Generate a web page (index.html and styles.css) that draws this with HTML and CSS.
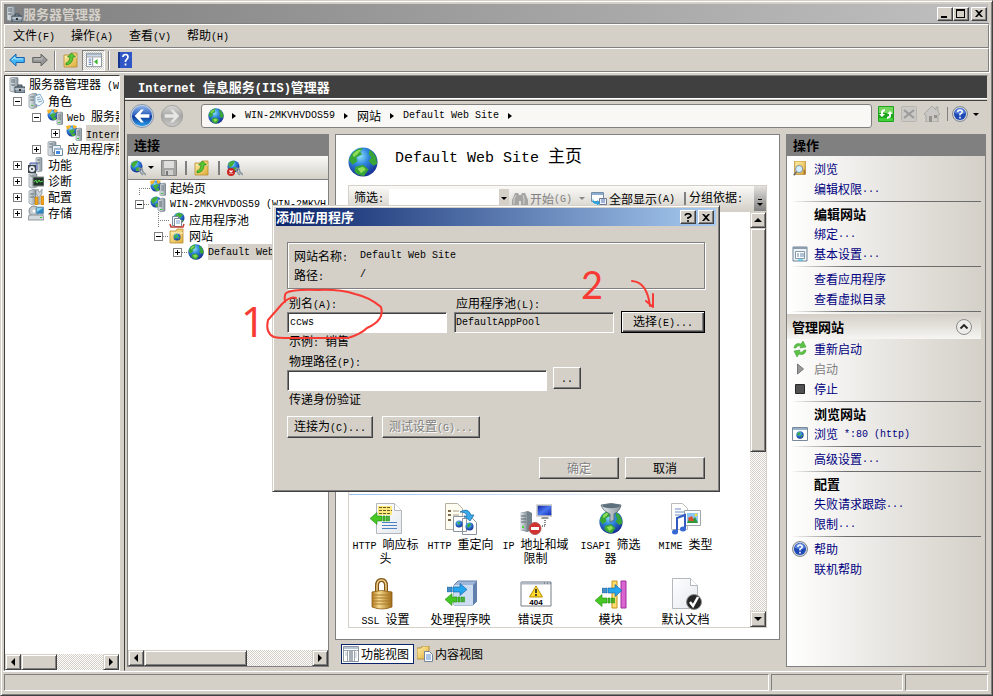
FILE: index.html
```html
<!DOCTYPE html>
<html lang="zh-CN">
<head>
<meta charset="utf-8">
<title>服务器管理器</title>
<link rel="stylesheet" href="styles.css">
</head>
<body>
<svg class="defs" aria-hidden="true">
  <defs>
    <radialGradient id="sea" cx=".4" cy=".3" r=".75"><stop offset="0" stop-color="#8fe0fb"/><stop offset=".4" stop-color="#2f86dc"/><stop offset="1" stop-color="#14258a"/></radialGradient>
    <linearGradient id="orb" x2="0" y2="1"><stop offset="0" stop-color="#8db4ec"/><stop offset=".48" stop-color="#2558b8"/><stop offset=".52" stop-color="#0d3796"/><stop offset="1" stop-color="#2ba0ee"/></linearGradient>
    <linearGradient id="dim" x2="0" y2="1"><stop offset="0" stop-color="#d8d8d6"/><stop offset=".5" stop-color="#a6a6a4"/><stop offset="1" stop-color="#c9c9c7"/></linearGradient>
    <linearGradient id="steel" x2="1"><stop offset="0" stop-color="#e8edf0"/><stop offset="1" stop-color="#89949c"/></linearGradient>
    <linearGradient id="paper" x2="1" y2="1"><stop offset="0" stop-color="#fff"/><stop offset="1" stop-color="#e4e8ee"/></linearGradient>
    <linearGradient id="gold" x2="1"><stop offset="0" stop-color="#b57a1e"/><stop offset=".35" stop-color="#f6dc92"/><stop offset="1" stop-color="#a06a14"/></linearGradient>
    <linearGradient id="yel" x2="1" y2="1"><stop offset="0" stop-color="#fff0a8"/><stop offset="1" stop-color="#dfae3c"/></linearGradient>
    <linearGradient id="screen" x2="1" y2="1"><stop offset="0" stop-color="#0a1a9a"/><stop offset=".5" stop-color="#4a76f0"/><stop offset="1" stop-color="#0a22b0"/></linearGradient>

    <symbol id="globe" viewBox="0 0 32 32"><circle cx="16" cy="16" r="15.5" fill="url(#sea)"/><path d="M3 9Q8 1 16 1L13 5 15 8 9 11 10 15 5 19 1 14ZM23 3Q31 8 31 18L27 20 22 15 25 11 22 8ZM8 21L16 19 22 24 17 31Q10 30 7 26Z" fill="#38a636"/><path d="M5 8Q9 3 14 3L10 8 6 11ZM10 23L16 21 19 24 14 28Z" fill="#90dd58"/></symbol>
    <symbol id="mgr" viewBox="0 0 16 16"><path d="M1 1L7 0 9 1V14L4 15 1 14Z" fill="url(#steel)" stroke="#74828a" stroke-width=".7"/><path d="M2 3h4M2 5h4M2 8h4" stroke="#5c6a72"/><path d="M6 10h10v6H6zM9 10V8h4v2" fill="#8a9aa6" stroke="#3c4a54"/><path d="M6 12h10" stroke="#dfe6ea"/><path d="M10 12h2v2h-2z" fill="#333"/></symbol>
    <symbol id="roles" viewBox="0 0 16 16"><path d="M1 2L6 0 9 1V14L4 16 1 14Z" fill="url(#steel)" stroke="#74828a" stroke-width=".6"/><path d="M2 4h4M2 7h4" stroke="#65727a"/><path d="M7 3L12 1 16 9 11 13 7 11Z" fill="#eef6fc" stroke="#6b9cc0" stroke-width=".8"/><path d="M9 5L12 4M9 7L13 6M10 9L14 8" stroke="#6c93b4" stroke-width=".8"/><path d="M3 12h2v1H3z" fill="#3c3"/></symbol>
    <symbol id="iis" viewBox="0 0 16 16"><circle cx="6" cy="6" r="5.5" fill="url(#sea)"/><path d="M3 6Q6 3 9 5L7 8 5 9ZM5 9l4-1v3H6z" fill="#45ae39"/><path d="M0 1L5 0 4 3 1 5ZM7 0L11 1 9 4 7 3Z" fill="#f5b32b"/><path d="M10 4L14 3 16 4V15L12 16 10 15Z" fill="url(#steel)" stroke="#697780" stroke-width=".6"/><path d="M11 6h3M11 8h3M11 10h3" stroke="#56636b" stroke-width=".8"/><path d="M11 13h2v1h-2z" fill="#3c3"/></symbol>
    <symbol id="site" viewBox="0 0 16 16"><circle cx="6" cy="6" r="5.5" fill="url(#sea)"/><path d="M1 4Q4 0 8 1L6 5 3 8ZM5 8l4-1v4H6z" fill="#45ae39"/><path d="M8 4L13 2 15 3V15L11 16 8 14Z" fill="url(#steel)" stroke="#697780" stroke-width=".6"/><path d="M9 6h3M9 8h3M9 10h3" stroke="#56636b"/><path d="M10 13h2v1h-2z" fill="#3c3"/></symbol>
    <symbol id="appsrv" viewBox="0 0 16 16"><path d="M1 1L6 0 9 1V14L4 15 1 14Z" fill="url(#steel)" stroke="#74828a" stroke-width=".6"/><path d="M2 3h4M2 6h4" stroke="#65727a"/><path d="M5.500 4.500h8v7h-8z" fill="#e8eff5" stroke="#8395a5"/><path d="M7.500 7.500h8v7h-8z" fill="#fff" stroke="#6f8598"/><path d="M7 8h9" stroke="#9cb7cf" stroke-width="2"/><path d="M9 10h4v3H9z" fill="#3d8ae0"/></symbol>
    <symbol id="feature" viewBox="0 0 16 16"><path d="M8 1L12 0 14 1V14L10 15 8 14Z" fill="url(#steel)" stroke="#74828a" stroke-width=".6"/><path d="M9 3h3M9 6h3" stroke="#65727a"/><path d="M2 6h7v7H2z" fill="#b7c5d2" stroke="#4a5ab0"/><path d="M0 8h8v8H0z" fill="#3a4148"/><circle cx="4" cy="12" r="3" fill="#e5eaee"/><circle cx="4" cy="12" r="1" fill="#333"/></symbol>
    <symbol id="diag" viewBox="0 0 16 16"><path d="M1 1L6 0 9 1V14L4 15 1 14Z" fill="url(#steel)" stroke="#74828a" stroke-width=".6"/><path d="M2 3h4" stroke="#65727a"/><path d="M5 4h11v9H5z" fill="#26332c" stroke="#828d88"/><path d="M6 9l2-2 1 3 2-3 1 2 3-1" fill="none" stroke="#52e24c"/></symbol>
    <symbol id="config" viewBox="0 0 16 16"><path d="M1 2L6 0 8 1V14L4 16 1 14Z" fill="url(#steel)" stroke="#74828a" stroke-width=".6"/><path d="M2 5h4M2 8h4" stroke="#65727a"/><path d="M8 1v4l2 2v8h2V7l2-2V0l-2 3h-1L10 0Z" fill="#cbd3d9" stroke="#6c7780" stroke-width=".6"/><path d="M13 7h3v9h-3zM7 8h3v8H7z" fill="#f0a51c" stroke="#ac6b08" stroke-width=".5"/></symbol>
    <symbol id="storage" viewBox="0 0 16 16"><circle cx="6" cy="6" r="5" fill="#c7ccd0" stroke="#818a90"/><circle cx="6" cy="6" r="1.500" fill="#fff"/><path d="M8 2h8v7H8z" fill="#2d86c0" stroke="#9bacb8"/><path d="M9 3h6l-6 4z" fill="#8ad3f1"/><path d="M1 10h14l1 5H0z" fill="#d5dade" stroke="#6a757c" stroke-width=".7"/><path d="M12 12h2v1h-2z" fill="#3c3"/></symbol>
    <symbol id="pool" viewBox="0 0 16 16"><circle cx="10" cy="6" r="5.500" fill="url(#sea)"/><path d="M6 3q4-4 8 0l-3 3zM12 8l3 0-3 3z" fill="#45ae39"/><path d="M3.500 4.500h6v9h-6z" fill="#fff" stroke="#788799"/><path d="M5.500 6.500h5l2 2v6h-7z" fill="#fff" stroke="#788799"/><path d="M7 9h4M7 11h4" stroke="#759dca"/><path d="M1 12l1 3h12l1-3" fill="none" stroke="#c24236" stroke-width="1.500"/></symbol>
    <symbol id="folder" viewBox="0 0 16 16"><path d="M1 3h6l1-2h6v14H1z" fill="url(#yel)" stroke="#b78a2e" stroke-width=".8"/><path d="M2 5h12" stroke="#fff3bd"/></symbol>
    <symbol id="sites" viewBox="0 0 16 16"><use href="#folder"/><circle cx="8" cy="9" r="3.500" fill="url(#sea)"/><path d="M5 8l3-2 1 2-3 3zM9 9h2l-2 3z" fill="#42b43a"/></symbol>
    <symbol id="up" viewBox="0 0 16 16"><use href="#folder"/><path d="M3 11Q7 10 7 5H4.500L8.500 1l4 4H10Q10 12 3 13Z" fill="#57c834" stroke="#248515" stroke-width=".7"/></symbol>
    <symbol id="left" viewBox="0 0 16 14"><path d="M.700 7L7 1V4.500H15.300V9.500H7V13Z" fill="#41b6f5" stroke="#135aa8" stroke-width=".9"/><path d="M3 7l3-3v2h8" fill="none" stroke="#b3e6ff"/></symbol>
    <symbol id="right" viewBox="0 0 16 14"><path d="M15.300 7L9 1V4.500H.700V9.500H9V13Z" fill="#979797" stroke="#5d5d5d" stroke-width=".9"/><path d="M2 6h8V4" fill="none" stroke="#c8c8c8"/></symbol>
    <symbol id="panes" viewBox="0 0 18 16"><path d="M.500.500h17v15H.500z" fill="#fff" stroke="#7d8793"/><path d="M1 2h16" stroke="#a7b9cc" stroke-width="2"/><path d="M1 4.500h16M7.500 5v10" stroke="#7d8793"/><path d="M3 7h3M3 9h3M3 11h3M3 13h3" stroke="#5375aa"/><path d="M13 7v6l-4-3z" fill="#37b428"/></symbol>
    <symbol id="featview" viewBox="0 0 16 16"><path d="M.500.500h15v15H.500z" fill="#fff" stroke="#8c96a0"/><path d="M1 2h14" stroke="#b4c4d6" stroke-width="2"/><path d="M1 4.500h14M4.500 5v10M11.500 5v10" stroke="#9aa4ae"/><path d="M2 7h2M2 9h2M12 7h2M12 9h2M12 11h2" stroke="#b9c3cd"/><path d="M6 6h4M6 8h4M6 10h4M6 12h4M6 14h4" stroke="#4e5c6c"/></symbol>
    <symbol id="book" viewBox="0 0 14 16"><path d="M0 0h14v16H0z" fill="#2f56c5"/><path d="M0 0h2v16H0z" fill="#16358f"/><path d="M5 5Q5 2.500 7.500 2.500T10 5Q10 6.500 8.500 7.500L7.500 9V10M7.500 11.500V13.500" fill="none" stroke="#fff" stroke-width="1.700"/></symbol>
    <symbol id="help" viewBox="0 0 16 16"><circle cx="8" cy="8" r="7.500" fill="#d0d3d8" stroke="#85898f"/><circle cx="8" cy="8" r="6" fill="#1e48b6"/><path d="M3 7a5 5 0 0 1 10 0q-5 2-10 0z" fill="#5a84de"/><path d="M5.800 6Q5.800 4 8 4T10.200 6Q10.200 7.200 8 8.200V9.500M8 10.800V12.400" fill="none" stroke="#fff" stroke-width="1.500"/></symbol>
    <symbol id="refresh" viewBox="0 0 16 16"><rect width="16" height="16" rx="1" fill="#1fa41d"/><path d="M1 1h14v6H1z" fill="#72d65f"/><path d="M1 12h14v3H1z" fill="#3fd03a"/><path d="M3 9V6Q3 4 7 3V5L5 6V8H7L4 11 1 8H3M13 7V10Q13 12 9 13V11L11 10V8H9L12 5 15 8H13" fill="#fff"/></symbol>
    <symbol id="stopnav" viewBox="0 0 16 16"><rect x=".5" y=".5" width="15" height="15" rx="1" fill="#cbc9c5" stroke="#b8b5ae"/><path d="M3 4L13 12M13 4L3 12" stroke="#9b9b9b" stroke-width="2.200"/></symbol>
    <symbol id="home" viewBox="0 0 16 16"><path d="M0 8L8 0 12 4V1h2v5l2 2-2 1v7H2V9z" fill="#c9c8c5" stroke="#9e9d9a" stroke-width=".8"/><path d="M5 10h3v6H5zM10 9h3v3h-3z" fill="#96938d"/></symbol>
    <symbol id="plug" viewBox="0 0 16 16"><circle cx="6.500" cy="6.500" r="6" fill="url(#sea)"/><path d="M1 4Q4 0 8 1L6 5 3 8ZM6 8l3-1v4H6z" fill="#45ae39"/><path d="M9 8l3 1 1 3 3 3M9 9l2 4 2 2" fill="none" stroke="#89969e" stroke-width="1.600"/></symbol>
    <symbol id="unplug" viewBox="0 0 16 16"><use href="#plug"/><circle cx="4" cy="12" r="4" fill="#ca2422"/><path d="M2.500 10.500l3 3M5.500 10.500l-3 3" stroke="#fff" stroke-width="1.200"/></symbol>
    <symbol id="save" viewBox="0 0 16 16"><path d="M.500.500h15v15H.500z" fill="#a5a5a3" stroke="#858583"/><path d="M3 1h10v7H3z" fill="#dededc"/><path d="M4 10h8v5H4z" fill="#cfcfcd"/><path d="M5 11h2v4H5z" fill="#777"/></symbol>
    <symbol id="search" viewBox="0 0 16 18"><path d="M2 0h12v15H2z" fill="url(#yel)" stroke="#bd8b30"/><path d="M12 10h2v5h-2z" fill="#a8732c"/><circle cx="7" cy="9" r="4" fill="#d4eefd" stroke="#74899a"/><path d="M4 12L1 16" stroke="#737373" stroke-width="2"/></symbol>
    <symbol id="settings" viewBox="0 0 16 16"><path d="M1 1h14v14H1z" fill="#eef3f8" stroke="#6f8296"/><path d="M1 1h14v2H1z" fill="#8b9cad"/><path d="M3.500 5.500h9v7h-9z" fill="#fff" stroke="#8598aa"/><path d="M5 8h2M8 8h4M5 10h2M8 10h4" stroke="#6684aa"/><path d="M6 14h5" stroke="#23c1e9"/></symbol>
    <symbol id="webwin" viewBox="0 0 16 14"><path d="M.500.500h15v13H.500z" fill="#fff" stroke="#76889a"/><path d="M1 2h14" stroke="#9bb1c8" stroke-width="2"/><circle cx="8" cy="8" r="3.700" fill="url(#sea)"/><path d="M5 7l2-2 2 1-3 3zM9 8h2l-2 3z" fill="#3da63b"/></symbol>
    <symbol id="restart" viewBox="0 0 14 16"><path d="M1 7Q2 1 8 3L10 0 13 6 7 7 8 5Q4 4 3 7ZM13 9Q12 15 6 13L4 16 1 10 7 9 6 11Q10 12 11 9Z" fill="#5cc445" stroke="#36952a" stroke-width=".5"/></symbol>
    <symbol id="binoc" viewBox="0 0 16 14"><path d="M3 1h3l1 2h2l1-2h3l3 7v6H9V9H7v5H0V8z" fill="#a5a5a3"/><path d="M4 3L2 7v5M11 3l1 4v5" fill="none" stroke="#d6d6d4"/></symbol>
    <symbol id="showall" viewBox="0 0 16 14"><path d="M.500.500h12v9H.500z" fill="#fff" stroke="#768da6"/><path d="M1 2h11" stroke="#8bacd3" stroke-width="2"/><path d="M8.500 6.500h7v6h-7z" fill="#eef3f8" stroke="#6f7890"/><path d="M10 8h4M10 10h4" stroke="#5575bd"/><path d="M2 6q0 4 4 4V8l3 3-3 3v-2Q0 12 2 6z" fill="#27a4df"/></symbol>
    <symbol id="content" viewBox="0 0 16 16"><path d="M0 2h4l1-2h7v13H0z" fill="url(#yel)" stroke="#b68f45"/><path d="M7.500 5.500h5l3 3v7h-8z" fill="#fff" stroke="#70849a"/><path d="M9 9h5M9 11h5M9 13h5" stroke="#548bd2"/></symbol>

    <symbol id="doc" viewBox="0 0 26 31"><path d="M.500.500h18l7 7v23H.500z" fill="url(#paper)" stroke="#b4b8bd"/><path d="M18.500.500v7h7" fill="#fff" stroke="#b4b8bd"/></symbol>
    <symbol id="greenl" viewBox="0 0 20 12"><path d="M0 6L7 0V3.500H12V8.500H7V12ZM13 3.500h2v5h-2zM16 3.500h1.500v5H16zM18.500 3.500h1v5h-1z" fill="#46c725" stroke="#228f12" stroke-width=".6"/></symbol>
    <symbol id="bluer" viewBox="0 0 20 12"><path d="M20 6L13 0V3.500H6V8.500H13V12ZM3.500 3.500h1.500v5H3.500zM1.500 3.500h1v5h-1zM0 3.500h.500v5H0z" fill="#25a5ee" stroke="#145c9d" stroke-width=".6"/></symbol>
    <symbol id="f-http" viewBox="0 0 32 32"><use href="#doc" x="6" y="0" width="26" height="31"/><path d="M8 3h14v9H8z" fill="#ffe97c"/><path d="M9 4.500h11M9 7.500h13M9 10.500h11" stroke="#665a2a" stroke-dasharray="3 1"/><path d="M12 19.500h15M12 22.500h15M12 25.500h15" stroke="#4b84c2"/><use href="#greenl" x="0" y="9" width="20" height="13"/></symbol>
    <symbol id="f-redirect" viewBox="0 0 32 32"><path d="M.500.500h12l5 5v21h-17z" fill="#fffdf2" stroke="#b7b0a1"/><path d="M3 8h3M3 12h3M3 17h3" stroke="#7b6849" stroke-width="2"/><path d="M8 8h6M8 12h6" stroke="#a89c86"/><path d="M8.500 13.500h10l3 3v12h-13zM17.500 15.500h10l4 4v12h-14z" fill="#fff" stroke="#8a939d"/><circle cx="14" cy="21" r="3.500" fill="url(#sea)"/><circle cx="24.500" cy="23.500" r="4" fill="url(#sea)"/><path d="M12 19l3 0-1 3zM22 22l3-2 1 2-3 3z" fill="#38ac36"/><path d="M15 9Q23 4 26 12H29L25 18 19 13H22Q21 9 15 9Z" fill="#39a8e9" stroke="#1765a0" stroke-width=".7"/></symbol>
    <symbol id="f-ip" viewBox="0 0 32 32"><path d="M0 10L8 8 12 10V27L7 29 0 27Z" fill="#75838a"/><path d="M0 10L7 9V28L0 27Z" fill="url(#steel)"/><path d="M1 13h5M1 16h5M1 19h5" stroke="#5b6870"/><path d="M2 23h2v2H2z" fill="#4bdb36"/><path d="M17 2h15v11H17z" fill="url(#screen)" stroke="#c9c9c3" stroke-width="1.500"/><path d="M22 14h6l1 2h-8z" fill="#96969a"/><path d="M25 17v6h-4" fill="none" stroke="#111" stroke-dasharray="1 1"/><circle cx="15" cy="25.500" r="6" fill="#d33030" stroke="#ac5959"/><path d="M11 24h8v3h-8z" fill="#fff"/></symbol>
    <symbol id="f-isapi" viewBox="0 0 32 32"><use href="#globe" x="4" y="7" width="24" height="24"/><path d="M6 2Q16-1 26 2 25 8 19 11V17L15 19V11Q8 8 6 2Z" fill="url(#steel)" stroke="#52616a" stroke-width=".8"/><ellipse cx="16" cy="3" rx="9" ry="2.200" fill="#5d707e"/></symbol>
    <symbol id="f-mime" viewBox="0 0 32 32"><path d="M1.500.500h11l5 5v21h-16z" fill="#fff" stroke="#bbb"/><path d="M5 6h6M5 9h10M5 12h9" stroke="#6b8cc4"/><path d="M14.500 7.500h16v15h-16z" fill="#fff" stroke="#a0a5aa"/><path d="M17 10h11v10H17z" fill="#8dc5f4"/><path d="M17 20l3-6 3 2 2-2 3 6z" fill="#2c9b37"/><path d="M18 15l4-2 2 5h-5z" fill="#dc4e32"/><circle cx="26" cy="12" r="1.500" fill="#f2df45"/><path d="M7 29V15L15 12V26" fill="none" stroke="#315bc2" stroke-width="2"/><ellipse cx="5" cy="29" rx="3" ry="2.500" fill="#3568d4"/><ellipse cx="13" cy="26" rx="3" ry="2.500" fill="#3568d4"/></symbol>
    <symbol id="f-ssl" viewBox="0 0 32 32"><path d="M7 15V8Q7 2 11.500 2T16 8V15" fill="none" stroke="#805515" stroke-width="4"/><path d="M7 15V8Q7 2 11.500 2T16 8V15" fill="none" stroke="#ecd18a" stroke-width="1.500"/><path d="M2 14Q11 11 22 14V29Q12 33 2 29Z" fill="url(#gold)" stroke="#8e5c14" stroke-width=".8"/><path d="M3 17h18M3 20h18M3 23h18M3 26h18" stroke="#a97928"/></symbol>
    <symbol id="f-handler" viewBox="0 0 32 32"><path d="M9 7L13 3H32V23L28 27H9Z" fill="#9fb7d8" stroke="#6482ab"/><path d="M9 7H28V27H9Z" fill="#ccdcf1"/><path d="M28 7L32 3V23L28 27Z" fill="#6280ac"/><use href="#bluer" x="2" y="5" width="20" height="13"/><use href="#greenl" x="0" y="15" width="20" height="13"/></symbol>
    <symbol id="f-error" viewBox="0 0 32 32"><path d="M1 4h30v24H1z" fill="#fff" stroke="#777d83"/><path d="M1 5h30" stroke="#aeb7c2" stroke-width="3"/><path d="M24 5h1M27 5h1M30 5h1" stroke="#4f5e70"/><path d="M16 8L22.500 19h-13z" fill="#ffd92e" stroke="#b99008"/><path d="M16 11v4M16 16v2" stroke="#222" stroke-width="1.600"/><text x="16" y="27" text-anchor="middle" class="code">404</text></symbol>
    <symbol id="f-module" viewBox="0 0 32 32"><path d="M17 3h5v27h-5z" fill="#ffdf6e" stroke="#c49218"/><path d="M26 3h5v27h-5z" fill="#d966d0" stroke="#a02d99"/><use href="#bluer" x="7" y="6" width="20" height="13"/><use href="#greenl" x="0" y="16" width="20" height="13"/></symbol>
    <symbol id="f-default" viewBox="0 0 32 32"><use href="#doc" x="2" y="0" width="26" height="31"/><circle cx="24" cy="24" r="7.500" fill="#252525" stroke="#8e8e8e"/><path d="M20 24l3 4 5-9" fill="none" stroke="#fff" stroke-width="2.500"/></symbol>
  </defs>
</svg>

<div class="window">
  <header class="titlebar">
    <svg class="i16"><use href="#mgr"/></svg>
    <h1>服务器管理器</h1>
    <span class="grow"></span>
    <button class="cap" aria-label="最小化"><svg viewBox="0 0 10 9"><path d="M1 7h6v2H1z"/></svg></button>
    <button class="cap" aria-label="最大化"><svg viewBox="0 0 10 9"><path fill-rule="evenodd" d="M0 0h9v9H0zM1 2v6h7V2z"/></svg></button>
    <button class="cap spaced" aria-label="关闭"><svg viewBox="0 0 10 9"><path d="M1 1h2l2 2 2-2h2L6 4.500 9 8H7L5 6 3 8H1l3-3.500z"/></svg></button>
  </header>
  <nav class="menubar">
    <button>文件<span class="en">(F)</span></button><button>操作<span class="en">(A)</span></button><button>查看<span class="en">(V)</span></button><button>帮助<span class="en">(H)</span></button>
  </nav>
  <div class="toolbar">
    <button class="tool" aria-label="后退"><svg class="i16"><use href="#left"/></svg></button>
    <button class="tool" aria-label="前进"><svg class="i16"><use href="#right"/></svg></button>
    <span class="vsep"></span>
    <button class="tool" aria-label="向上"><svg class="i16"><use href="#up"/></svg></button>
    <button class="tool pressed" aria-label="显示控制台树"><svg class="i16"><use href="#panes"/></svg></button>
    <span class="vsep"></span>
    <button class="tool" aria-label="帮助"><svg class="i16"><use href="#book"/></svg></button>
  </div>

  <main class="main">
    <section class="console">
      <ul class="tree">
        <li><svg class="i16"><use href="#mgr"/></svg><span>服务器管理器<span class="en"> (W</span></span></li>
        <li class="l1"><b class="box"></b><svg class="i16"><use href="#roles"/></svg><span>角色</span></li>
        <li class="l2"><b class="box"></b><svg class="i16"><use href="#iis"/></svg><span><span class="en">Web </span>服务器</span></li>
        <li class="l3"><b class="box plus"></b><svg class="i16"><use href="#iis"/></svg><span class="sel"><span class="en">Internet</span></span></li>
        <li class="l2"><b class="box plus"></b><svg class="i16"><use href="#appsrv"/></svg><span>应用程序服</span></li>
        <li class="l1"><b class="box plus"></b><svg class="i16"><use href="#feature"/></svg><span>功能</span></li>
        <li class="l1"><b class="box plus"></b><svg class="i16"><use href="#diag"/></svg><span>诊断</span></li>
        <li class="l1"><b class="box plus"></b><svg class="i16"><use href="#config"/></svg><span>配置</span></li>
        <li class="l1"><b class="box plus"></b><svg class="i16"><use href="#storage"/></svg><span>存储</span></li>
      </ul>
      <div class="hscroll"><button class="sb" aria-label="向左滚动"><i class="tri west"></i></button><span class="thumb short"></span><span class="grow"></span><button class="sb" aria-label="向右滚动"><i class="tri east"></i></button></div>
    </section>

    <section class="iis">
      <h2 class="iis-title"><span class="en-b">Internet </span>信息服务<span class="en-b">(IIS)</span>管理器</h2>
      <div class="navrow">
        <div class="travel">
          <button aria-label="后退"><svg viewBox="0 0 26 26"><circle cx="13" cy="13" r="12.500" fill="#c8d3e2" stroke="#8493a8"/><circle cx="13" cy="13" r="11" fill="url(#orb)"/><path d="M5 13l7-7h3l-4 5h10v4H11l4 5h-3z" fill="#fff"/></svg></button>
          <button aria-label="前进"><svg viewBox="0 0 26 26"><circle cx="13" cy="13" r="11.500" fill="url(#dim)" stroke="#a0a09e"/><path d="M21 13l-7-7h-3l4 5H5v4h10l-4 5h3z" fill="#e6e6e4"/></svg></button>
        </div>
        <div class="address">
          <svg class="i16"><use href="#globe"/></svg><i class="tri east small"></i><a href="#" class="en">WIN-2MKVHVDOS59</a><i class="tri east small"></i><a href="#">网站</a><i class="tri east small"></i><a href="#" class="en">Default Web Site</a><i class="tri east small"></i>
        </div>
        <div class="navtools">
          <button class="tool" aria-label="刷新"><svg class="i16"><use href="#refresh"/></svg></button>
          <button class="tool" aria-label="停止"><svg class="i16"><use href="#stopnav"/></svg></button>
          <button class="tool" aria-label="主页"><svg class="i16"><use href="#home"/></svg></button>
          <span class="bar"></span>
          <button class="tool" aria-label="帮助"><svg class="i16"><use href="#help"/></svg><i class="tri south small"></i></button>
        </div>
      </div>

      <div class="columns">
        <section class="connections">
          <h3 class="panel-head">连接</h3>
          <div class="conn-tools">
            <button class="tool" aria-label="连接"><svg class="i16"><use href="#plug"/></svg><i class="tri south small"></i></button>
            <button class="tool" aria-label="保存"><svg class="i16"><use href="#save"/></svg></button>
            <span class="bar"></span>
            <button class="tool" aria-label="向上"><svg class="i16"><use href="#up"/></svg></button>
            <span class="bar"></span>
            <button class="tool" aria-label="断开连接"><svg class="i16"><use href="#unplug"/></svg></button>
          </div>
          <ul class="tree conn">
            <li class="c0"><b class="elbow first"></b><svg class="i16"><use href="#iis"/></svg><span>起始页</span></li>
            <li class="c0"><b class="box"></b><b class="dots"></b><svg class="i16"><use href="#site"/></svg><span class="en">WIN-2MKVHVDOS59 (WIN-2MKVH</span></li>
            <li class="c1"><b class="elbow"></b><svg class="i16"><use href="#pool"/></svg><span>应用程序池</span></li>
            <li class="c1"><b class="box"></b><b class="dots"></b><svg class="i16"><use href="#sites"/></svg><span>网站</span></li>
            <li class="c2"><b class="box plus"></b><b class="dots"></b><svg class="i16"><use href="#globe"/></svg><span class="sel en">Default Web Site</span></li>
          </ul>
          <div class="hscroll"><button class="sb" aria-label="向左滚动"><i class="tri west"></i></button><span class="thumb long"></span><span class="grow"></span><button class="sb" aria-label="向右滚动"><i class="tri east"></i></button></div>
        </section>

        <section class="center">
          <div class="page">
            <div class="page-head"><svg class="i32"><use href="#globe" width="30" height="30"/></svg><h3><span class="en-l">Default Web Site </span>主页</h3></div>
            <div class="filter">
              <label for="filter">筛选<span class="en">:</span></label>
              <span class="combo"><select id="filter"><option></option></select><i class="tri south small"></i></span>
              <button class="flat off"><svg class="i16"><use href="#binoc"/></svg>开始<span class="en">(G)</span></button><i class="tri south small off"></i>
              <button class="flat"><svg class="i16"><use href="#showall"/></svg>全部显示<span class="en">(A)</span></button>
              <span class="bar"></span><span>分组依据<span class="en">:</span></span>
              <span class="grow"></span>
              <button class="more" aria-label="更多"><i class="tri south small"></i></button>
            </div>
            <div class="list">
              <div class="features">
                <hr>
                <ul>
                  <li><svg class="i32"><use href="#f-http"/></svg><span><span class="en">HTTP </span>响应标头</span></li>
                  <li><svg class="i32"><use href="#f-redirect"/></svg><span><span class="en">HTTP </span>重定向</span></li>
                  <li><svg class="i32"><use href="#f-ip"/></svg><span><span class="en">IP </span>地址和域限制</span></li>
                  <li><svg class="i32"><use href="#f-isapi"/></svg><span><span class="en">ISAPI </span>筛选器</span></li>
                  <li><svg class="i32"><use href="#f-mime"/></svg><span><span class="en">MIME </span>类型</span></li>
                  <li><svg class="i32"><use href="#f-ssl"/></svg><span><span class="en">SSL </span>设置</span></li>
                  <li><svg class="i32"><use href="#f-handler"/></svg><span>处理程序映射</span></li>
                  <li><svg class="i32"><use href="#f-error"/></svg><span>错误页</span></li>
                  <li><svg class="i32"><use href="#f-module"/></svg><span>模块</span></li>
                  <li><svg class="i32"><use href="#f-default"/></svg><span>默认文档</span></li>
                </ul>
              </div>
              <div class="vscroll"><button class="sb" aria-label="向上滚动"><i class="tri north"></i></button><span class="thumb"></span><span class="grow"></span><button class="sb" aria-label="向下滚动"><i class="tri south"></i></button></div>
            </div>
          </div>
          <div class="views">
            <button class="view on"><svg class="i16"><use href="#featview"/></svg>功能视图</button>
            <button class="view"><svg class="i16"><use href="#content"/></svg>内容视图</button>
          </div>
        </section>

        <aside class="actions">
          <h3 class="panel-head">操作</h3>
          <div class="action-list">
            <a href="#"><svg class="i16"><use href="#search"/></svg>浏览</a>
            <a href="#">编辑权限<span class="en">...</span></a>
            <hr>
            <h4>编辑网站</h4>
            <a href="#">绑定<span class="en">...</span></a>
            <a href="#"><svg class="i16"><use href="#settings"/></svg>基本设置<span class="en">...</span></a>
            <hr>
            <a href="#">查看应用程序</a>
            <a href="#">查看虚拟目录</a>
            <hr>
            <div class="group"><h4>管理网站</h4><button aria-label="折叠"><svg viewBox="0 0 16 16"><circle cx="8" cy="8" r="7.500" fill="#ecebe8" stroke="#8a8a88"/><path d="M4.500 9.500L8 6l3.500 3.500" fill="none" stroke="#222" stroke-width="1.800"/></svg></button></div>
            <a href="#"><svg class="i16"><use href="#restart"/></svg>重新启动</a>
            <a class="off"><svg class="i16" viewBox="0 0 16 16"><path d="M5.500 3v10l6-5z" fill="#999" stroke="#777"/></svg>启动</a>
            <a href="#"><svg class="i16" viewBox="0 0 16 16"><path d="M3.500 3.500h9v9h-9z" fill="#505050" stroke="#282828"/></svg>停止</a>
            <hr>
            <h4>浏览网站</h4>
            <a href="#"><svg class="i16"><use href="#webwin"/></svg>浏览<span class="en"> *:80 (http)</span></a>
            <hr>
            <a href="#">高级设置<span class="en">...</span></a>
            <hr>
            <h4>配置</h4>
            <a href="#">失败请求跟踪<span class="en">...</span></a>
            <a href="#">限制<span class="en">...</span></a>
            <hr>
            <a href="#"><svg class="i16"><use href="#help"/></svg>帮助</a>
            <a href="#">联机帮助</a>
          </div>
        </aside>
      </div>
    </section>
  </main>
  <footer class="status"><span></span><span></span><span></span></footer>
</div>

<div class="dialog" role="dialog" aria-labelledby="dlg-title">
  <div class="dlg-bar"><h2 id="dlg-title">添加应用程序</h2><span class="grow"></span>
    <button class="cap" aria-label="帮助"><svg viewBox="0 0 10 9"><path d="M2 2.500Q2.500.700 5 .700T8 2.500Q8 4 5 4.700V6M4 8h2" fill="none" stroke="#000" stroke-width="1.600"/></svg></button>
    <button class="cap spaced" aria-label="关闭"><svg viewBox="0 0 10 9"><path d="M1 1h2l2 2 2-2h2L6 4.500 9 8H7L5 6 3 8H1l3-3.500z"/></svg></button>
  </div>
  <form class="dlg-body">
    <dl class="info"><dt>网站名称<span class="en">:</span></dt><dd class="en">Default Web Site</dd><dt>路径<span class="en">:</span></dt><dd class="en">/</dd></dl>
    <div class="fields">
      <div class="field"><label for="alias">别名<span class="en">(A):</span></label><input id="alias" type="text" value="ccws"></div>
      <div class="field"><label for="pool-name">应用程序池<span class="en">(L):</span></label><input id="pool-name" type="text" value="DefaultAppPool" readonly></div>
      <button type="button" class="push default">选择<span class="en">(E)...</span></button>
    </div>
    <p>示例<span class="en">: </span>销售</p>
    <div class="path">
      <div class="field wide"><label for="path">物理路径<span class="en">(P):</span></label><input id="path" type="text"></div>
      <button type="button" class="push browse"><span class="en">..</span></button>
    </div>
    <p>传递身份验证</p>
    <div class="auth"><button type="button" class="push">连接为<span class="en">(C)...</span></button><button type="button" class="push" disabled>测试设置<span class="en">(G)...</span></button></div>
    <div class="ok"><button type="button" class="push" disabled>确定</button><button type="button" class="push">取消</button></div>
  </form>
  <svg class="marks" viewBox="0 0 448 286" aria-hidden="true">
    <path d="M23 92Q17 90 9 98L-5 114Q-8 127 1 131Q5 132 12 132H75Q88 128 94 122Q112 114 108 101Q96 91 82 88Q66 83 45 84Q20 83 13 87Q11 90 12 96"/>
    <path d="M359 75Q374 76 377 100M373 95L380 101L380 88"/>
    <text x="-32" y="131" class="one">1</text>
    <text x="308" y="93" class="two">2</text>
  </svg>
</div>
</body>
</html>
```
FILE: styles.css
```css
* { box-sizing: border-box; }

:root {
  --face: #d4d0c8;
  --shade: #808080;
  --dark: #404040;
  --check: repeating-conic-gradient(#fff 0 25%, #d4d0c8 0 50%) 0 0 / 2px 2px;
}

body {
  margin: 0;
  overflow: hidden;
  background: var(--face);
  color: #000;
  font: 12px/16px "Noto Sans CJK SC", sans-serif;
  white-space: nowrap;
}

h1, h2, h3, h4, p, ul, dl, dd { margin: 0; padding: 0; font-size: 12px; font-weight: normal; list-style: none; }
button, input, select { font: inherit; color: inherit; border-radius: 0; margin: 0; padding: 0; }
button { border: 0; background: none; white-space: nowrap; }
a { color: inherit; text-decoration: none; }
svg { display: block; flex: none; }

.defs { position: absolute; width: 0; height: 0; }
.i16 { width: 16px; height: 16px; }
.i32 { width: 32px; height: 32px; }
.grow { flex: 1; }
.en { font-family: "Liberation Mono", monospace; font-size: 10px; white-space: pre; }
.en-b { font-family: "Liberation Mono", monospace; font-size: 12px; white-space: pre; }
.en-l { font-family: "Liberation Mono", monospace; font-size: 15px; white-space: pre; }
.code { font: bold 8px "Liberation Sans", sans-serif; }

.tri { display: block; flex: none; width: 0; height: 0; border: 4px solid transparent; }
.tri.west { border-right-color: #000; border-left-width: 0; }
.tri.east { border-left-color: #000; border-right-width: 0; }
.tri.north { border-bottom-color: #000; border-top-width: 0; }
.tri.south { border-top-color: #000; border-bottom-width: 0; }
.tri.small { border-width: 3px; }
.tri.east.small { border-right-width: 0; border-left-width: 4px; }
.tri.south.small { border-bottom-width: 0; }
.tri.off { border-top-color: #888; }

.window {
  display: flex;
  flex-direction: column;
  height: 100vh;
  padding: 2px 3px 2px 2px;
  border: 1px solid;
  border-color: var(--face) var(--dark) var(--dark) var(--face);
  box-shadow: inset 1px 1px #fff, inset -1px -1px var(--shade);
}

.titlebar {
  display: flex;
  align-items: center;
  flex: none;
  height: 19px;
  margin: 1px;
  padding: 0 1px 0 2px;
  background: linear-gradient(90deg, #808080, #c0c0c0);
}
.titlebar h1 { margin-left: 1px; font-size: 13px; font-weight: bold; color: var(--face); }

.cap {
  display: flex;
  align-items: center;
  justify-content: center;
  width: 16px;
  height: 14px;
  background: var(--face);
  border: 1px solid;
  border-color: #fff var(--dark) var(--dark) #fff;
  box-shadow: inset -1px -1px var(--shade);
}
.cap svg { width: 10px; height: 9px; }
.cap.spaced { margin-left: 2px; }

.menubar, .toolbar {
  display: flex;
  align-items: center;
  flex: none;
  height: 24px;
  margin-left: 1px;
  border: 1px solid;
  border-color: #fff var(--shade) var(--shade) #fff;
  box-shadow: 0 -1px var(--shade), 1px 1px #fff;
}
.menubar button { padding: 0 8px; }
.toolbar { padding-left: 3px; }
.tool { display: flex; align-items: center; gap: 2px; }
.toolbar .tool { justify-content: center; width: 23px; height: 21px; }
.toolbar .tool:first-child { width: 18px; margin-right: 2px; }
.toolbar .pressed { background: var(--check); border: 1px solid; border-color: var(--shade) #fff #fff var(--shade); }
.vsep { width: 2px; height: 19px; margin: 0 3px; background: linear-gradient(90deg, var(--shade) 50%, #fff 50%); }
.bar { width: 2px; height: 14px; background: var(--shade); }

.main { display: flex; flex: 1; min-height: 0; gap: 4px; margin-top: 3px; padding: 0 1px; border-bottom: 1px solid #fff; }

.console {
  display: flex;
  flex-direction: column;
  width: 116px;
  flex: none;
  border: 1px solid;
  border-color: var(--dark) #fff #fff var(--dark);
  background: #fff;
}
.tree { flex: 1; min-height: 0; overflow: hidden; padding: 1px 0 0 4px; }
.tree li { display: flex; align-items: center; height: 16px; }
.tree li > span { margin-left: 4px; }
.tree .l1 .box, .tree .l2 .box, .tree .l3 .box { margin-right: 6px; }
.tree .l1 { padding-left: 4px; }
.tree .l2 { padding-left: 23px; }
.tree .l3 { padding-left: 42px; }
.tree li > .en { height: 16px; padding-top: 1px; }
.sel { background: var(--face); height: 16px; line-height: 16px; }
.box {
  flex: none;
  width: 9px;
  height: 9px;
  border: 1px solid var(--shade);
  background: linear-gradient(#000, #000) center / 5px 1px no-repeat #fff;
}
.box.plus { background: linear-gradient(#000, #000) center / 5px 1px no-repeat, linear-gradient(#000, #000) center / 1px 5px no-repeat #fff; }

.hscroll, .vscroll { display: flex; flex: none; background: var(--check); }
.hscroll { height: 16px; }
.vscroll { flex-direction: column; width: 16px; }
.sb, .thumb { background: var(--face); border: 1px solid; border-color: var(--face) var(--dark) var(--dark) var(--face); box-shadow: inset 1px 1px #fff, inset -1px -1px var(--shade); }
.sb { display: flex; align-items: center; justify-content: center; width: 16px; height: 16px; }
.thumb.short { width: 36px; }
.thumb.long { width: 103px; }
.vscroll .thumb { height: 224px; }

.iis { display: flex; flex-direction: column; flex: 1; min-width: 0; border: 1px solid; border-color: var(--shade) transparent transparent var(--dark); }
.iis-title { flex: none; height: 22px; padding-left: 13px; background: var(--dark); color: #fff; font-size: 13px; line-height: 22px; font-weight: bold; }
.navrow { display: flex; align-items: flex-start; flex: none; height: 36px; padding: 5px 8px 0 5px; border-top: 1px solid #fff; box-shadow: inset 0 1px var(--face), inset 0 2px var(--dark); }
.travel { flex: none; width: 71px; }
.travel { display: flex; gap: 6px; }
.travel svg { width: 24px; height: 24px; }
.address { display: flex; align-items: center; flex: 1; height: 24px; gap: 9px; padding-left: 6px; border: 1px solid var(--shade); border-radius: 3px; background: #f9f8f5; }
.address .i16 { margin-right: -1px; }
.navtools { display: flex; align-items: center; gap: 7px; padding: 2px 0 0 6px; }
.navtools .bar { width: 1px; margin-right: -3px; }
.navtools .tool { gap: 5px; }

.columns { display: flex; flex: 1; min-height: 0; gap: 6px; padding: 0 1px 3px 2px; }
.panel-head { flex: none; height: 22px; padding-left: 6px; background: var(--shade); font-size: 13px; line-height: 22px; font-weight: bold; }

.connections { display: flex; flex-direction: column; flex: none; width: 202px; border: 1px solid var(--shade); border-top: 0; background: #fff; }
.conn-tools { display: flex; align-items: center; flex: none; gap: 7px; height: 24px; padding-left: 2px; background: linear-gradient(#fafaf8, var(--face)); border-bottom: 1px solid var(--shade); }
.conn-tools .bar { margin: 0 -2px 0 1px; }
.conn-tools .bar + .tool { margin-left: 2px; }
.tree.conn { padding: 0; }
.tree.conn .c0 { padding-left: 7px; }
.tree.conn .c1 { padding-left: 26px; }
.tree.conn .c2 { padding-left: 45px; }
.dots { flex: none; width: 6px; height: 1px; background: repeating-linear-gradient(90deg, var(--shade) 0 1px, #fff 1px 2px); }
.elbow { flex: none; align-self: stretch; width: 11px; margin-left: 4px; background: repeating-linear-gradient(90deg, var(--shade) 0 1px, #fff 1px 2px) 0 8px / 11px 1px no-repeat, repeating-linear-gradient(var(--shade) 0 1px, #fff 1px 2px) 0 0 / 1px 16px no-repeat; }
.elbow.first { background-position: 0 8px, 0 8px; }

.center { display: flex; flex-direction: column; flex: 1; min-width: 0; }
.page { display: flex; flex-direction: column; flex: 1; min-height: 0; padding: 12px 12px 11px; background: #fff; border: 1px solid var(--shade); }
.page-head { display: flex; flex: none; height: 38px; gap: 15px; }
.page-head h3 { font-size: 17px; line-height: 16px; }
.filter { display: flex; align-items: center; flex: none; gap: 3px; height: 27px; padding-left: 5px; background: linear-gradient(#fafaf8, var(--face)); border: 1px solid var(--face); }
.filter label { margin-right: 2px; }
.combo { display: flex; align-items: center; justify-content: flex-end; flex: none; width: 120px; height: 19px; background: linear-gradient(90deg, #fff 110px, var(--face) 110px); }
.combo select { flex: 1; width: 100%; height: 19px; appearance: none; border: 0; background: none; }
.combo .tri { margin: 0 2px; }
.flat { display: flex; align-items: center; }
.flat .i16 { margin-right: 2px; }
.flat .en, .action-list .en { padding-top: 2px; }
.filter > .tri { margin: 0 3px 0 4px; }
.filter > .bar { margin-left: 6px; }
.off, a.off { color: var(--shade); }
.more { display: flex; align-items: flex-end; justify-content: center; width: 12px; height: 25px; padding-bottom: 5px; background: linear-gradient(#e4e2de, var(--shade)); }
.more .tri { outline: 0; box-shadow: 0 -5px 0 -1px #000; }
.list { display: flex; flex: 1; min-height: 0; border: 1px solid var(--face); border-top: 0; }
.features { flex: 1; min-width: 0; padding-top: 282px; overflow: hidden; }
.features hr { height: 1px; margin: 0 40px 0 0; border: 0; background: linear-gradient(90deg, #9cc0ee, #fff); }
.features ul { display: grid; grid-template-columns: repeat(auto-fill, 75px); grid-auto-rows: 75px; padding-top: 8px; }
.features li { display: flex; flex-direction: column; align-items: center; gap: 3px; padding-right: 2px; line-height: 12px; text-align: center; white-space: normal; }
.features li > span { max-width: 69px; }
.features .en { line-height: 10px; }
.views { display: flex; flex: none; gap: 1px; padding: 4px 0 3px 6px; }
.view { display: flex; align-items: center; gap: 2px; height: 20px; padding: 0 4px 0 1px; border: 1px solid transparent; }
.view.on { background: #fff; border-color: #0a246a; }

.actions { display: flex; flex-direction: column; flex: none; width: 200px; border: 1px solid var(--shade); border-top: 0; background: linear-gradient(90deg, #fff, #e8e6e2 50%, var(--face)); }
.action-list { padding: 3px 4px 0 0; color: #000080; }
.action-list a, .action-list h4 { display: flex; align-items: center; height: 20px; padding-left: 27px; }
.action-list a .i16 { margin: 0 6px 0 -22px; }
.action-list h4 { color: #000; font-size: 13px; font-weight: bold; }
.action-list hr { height: 1px; margin: 2px 0 2px 3px; border: 0; background: linear-gradient(90deg, transparent, #6c6c6c 30%); }
.group { display: flex; align-items: center; justify-content: space-between; height: 25px; padding-right: 9px; background: linear-gradient(var(--face), #f6f5f2); }
.action-list .group h4 { padding-left: 5px; }
.group svg { width: 16px; height: 16px; }

.status { display: flex; flex: none; gap: 2px; height: 19px; margin: 2px 1px 0; padding-bottom: 2px; }
.status span { border: 1px solid; border-color: var(--shade) #fff #fff var(--shade); width: 83px; }
.status span:first-child { flex: 1; }
.status span:nth-child(2) { width: 132px; }

.dialog {
  position: absolute;
  left: 272px;
  top: 205px;
  width: 448px;
  height: 287px;
  padding: 2px 3px;
  background: var(--face);
  border: 1px solid;
  border-color: var(--face) var(--dark) var(--dark) var(--face);
  box-shadow: inset 1px 1px #fff, inset -1px -1px var(--shade);
}
.dlg-bar { display: flex; align-items: center; height: 18px; padding: 0 2px 0 0; background: linear-gradient(90deg, #0a246a, #a6caf0); }
.dlg-bar h2 { font-size: 13px; font-weight: bold; color: #fff; }
.dlg-body { padding: 16px 11px 0; }
.info { display: grid; grid-template-columns: 66px 1fr; align-content: center; height: 47px; padding: 2px 6px 0; border: 1px solid var(--shade); box-shadow: inset 1px 1px #fff, 1px 1px #fff; }
.fields { display: flex; align-items: flex-end; gap: 7px; margin-top: 6px; }
.field { display: flex; flex-direction: column; width: 160px; }
.field label { padding-left: 2px; height: 17px; }
.field.wide { width: 260px; }
.field input {
  width: 100%;
  height: 21px;
  padding-left: 2px;
  font: 10px "Liberation Mono", monospace;
  background: #fff;
  border: 1px solid;
  border-color: var(--shade) #fff #fff var(--shade);
  box-shadow: inset 1px 1px var(--dark);
}
.field input[readonly] { background: var(--face); padding-left: 1px; }
.dlg-body p { padding-left: 2px; height: 20px; line-height: 16px; }
.path { display: flex; align-items: flex-end; gap: 6px; }
.push { height: 22px; padding: 0 6px; background: var(--face); border: 1px solid; border-color: #fff var(--dark) var(--dark) #fff; box-shadow: inset -1px -1px var(--shade); }
.push:disabled { color: var(--shade); text-shadow: 1px 1px #fff; }
.push.default { flex: 1; border: 1px solid #000; box-shadow: inset 1px 1px #fff, inset -1px -1px var(--dark), inset -2px -2px var(--shade); }
.push.browse { width: 28px; margin-bottom: 2px; }
.auth { display: flex; gap: 9px; margin-top: 5px; }
.ok { display: flex; justify-content: flex-end; gap: 6px; margin-top: 19px; }
.ok .push { width: 80px; }
.marks { position: absolute; left: 0; top: 0; width: 448px; height: 286px; overflow: visible; pointer-events: none; }
.marks path { fill: none; stroke: #f83a34; stroke-width: 2; stroke-linecap: round; stroke-linejoin: round; }
.marks text { fill: #f83a34; }
.marks .one { font: 42px "Noto Sans", sans-serif; }
.marks .two { font: 38px Lato, sans-serif; }
```
